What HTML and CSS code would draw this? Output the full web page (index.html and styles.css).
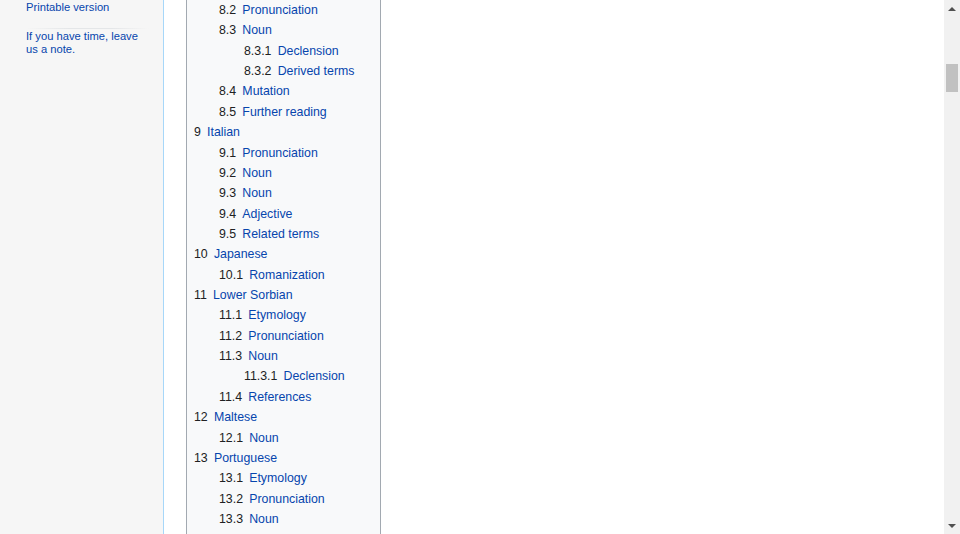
FILE: index.html
```html
<!DOCTYPE html>
<html>
<head>
<meta charset="utf-8">
<link rel="stylesheet" href="styles.css">
</head>
<body>
<div class="window">
  <aside class="sidebar">
    <ul class="portal">
      <li><a href="#">Printable version</a></li>
    </ul>
    <div class="portal-sep"></div>
    <ul class="portal">
      <li><a href="#">If you have time, leave us a note.</a></li>
    </ul>
  </aside>
  <main class="content">
    <div class="toc">
      <ul class="toc-list">
        <li class="partial">
          <ul>
            <li><span class="num">8.2</span><a href="#">Pronunciation</a></li>
            <li><span class="num">8.3</span><a href="#">Noun</a>
              <ul>
                <li><span class="num">8.3.1</span><a href="#">Declension</a></li>
                <li><span class="num">8.3.2</span><a href="#">Derived terms</a></li>
              </ul>
            </li>
            <li><span class="num">8.4</span><a href="#">Mutation</a></li>
            <li><span class="num">8.5</span><a href="#">Further reading</a></li>
          </ul>
        </li>
        <li><span class="num">9</span><a href="#">Italian</a>
          <ul>
            <li><span class="num">9.1</span><a href="#">Pronunciation</a></li>
            <li><span class="num">9.2</span><a href="#">Noun</a></li>
            <li><span class="num">9.3</span><a href="#">Noun</a></li>
            <li><span class="num">9.4</span><a href="#">Adjective</a></li>
            <li><span class="num">9.5</span><a href="#">Related terms</a></li>
          </ul>
        </li>
        <li><span class="num">10</span><a href="#">Japanese</a>
          <ul>
            <li><span class="num">10.1</span><a href="#">Romanization</a></li>
          </ul>
        </li>
        <li><span class="num">11</span><a href="#">Lower Sorbian</a>
          <ul>
            <li><span class="num">11.1</span><a href="#">Etymology</a></li>
            <li><span class="num">11.2</span><a href="#">Pronunciation</a></li>
            <li><span class="num">11.3</span><a href="#">Noun</a>
              <ul>
                <li><span class="num">11.3.1</span><a href="#">Declension</a></li>
              </ul>
            </li>
            <li><span class="num">11.4</span><a href="#">References</a></li>
          </ul>
        </li>
        <li><span class="num">12</span><a href="#">Maltese</a>
          <ul>
            <li><span class="num">12.1</span><a href="#">Noun</a></li>
          </ul>
        </li>
        <li><span class="num">13</span><a href="#">Portuguese</a>
          <ul>
            <li><span class="num">13.1</span><a href="#">Etymology</a></li>
            <li><span class="num">13.2</span><a href="#">Pronunciation</a></li>
            <li><span class="num">13.3</span><a href="#">Noun</a></li>
          </ul>
        </li>
      </ul>
    </div>
  </main>
  <div class="scrollbar">
    <div class="arrow up"></div>
    <div class="track"><div class="thumb"></div></div>
    <div class="arrow down"></div>
  </div>
</div>
</body>
</html>
```

FILE: styles.css
```css
* { box-sizing: border-box; }
html, body {
  margin: 0;
  padding: 0;
  height: 534px;
  overflow: hidden;
  background: #ffffff;
  font-family: "Liberation Sans", Arial, sans-serif;
}
a { color: #0645ad; text-decoration: none; }

.window {
  display: flex;
  height: 534px;
}

.sidebar {
  width: 164px;
  flex: none;
  background: #f6f6f6;
  border-right: 1px solid #a7d7f9;
  padding: 0 14px 0 26px;
}
.portal {
  list-style: none;
  margin: 0;
  padding: 0;
  font-size: 11.2px;
  line-height: 13px;
}
.portal li { margin: 0; }
.sidebar .portal:first-child { padding-top: 0.5px; }
.portal-sep {
  height: 1px;
  margin: 14px 0 1px 0;
  background: linear-gradient(to right, rgba(200,204,209,0) 0%, #e4e6e8 35%, #e4e6e8 70%, rgba(200,204,209,0) 100%);
}

.content {
  flex: 1;
  padding-left: 22px;
  background: #ffffff;
}

.toc {
  width: 195px;
  height: 534px;
  background: #f8f9fa;
  border-left: 1px solid #a2a9b1;
  border-right: 1px solid #a2a9b1;
  padding: 0 7px;
  font-size: 12.35px;
  overflow: hidden;
}
.toc ul {
  list-style: none;
  margin: 0;
  padding: 0;
}
.toc ul ul { margin-left: 25px; }
.toc-list { padding-top: 0.8px; }
.toc li {
  line-height: 20.36px;
  white-space: nowrap;
}
.toc .num {
  color: #202122;
  padding-right: 0.5em;
}

.scrollbar {
  width: 16px;
  flex: none;
  background: #f1f1f1;
  display: flex;
  flex-direction: column;
}
.arrow {
  height: 17px;
  flex: none;
  display: flex;
  align-items: center;
  justify-content: center;
}
.arrow.up::before {
  content: "";
  border-left: 4px solid transparent;
  border-right: 4px solid transparent;
  border-bottom: 4px solid #505050;
}
.arrow.down::before {
  content: "";
  border-left: 4px solid transparent;
  border-right: 4px solid transparent;
  border-top: 4px solid #505050;
}
.track {
  flex: 1;
  padding: 47px 2px 0 2px;
}
.thumb {
  height: 28px;
  background: #c1c1c1;
}
```
